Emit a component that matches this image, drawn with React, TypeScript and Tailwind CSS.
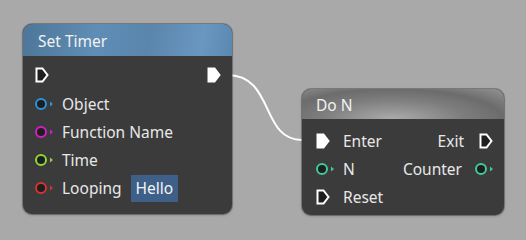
import React from "react";

type PinColor = string;

function ExecPin({ filled = false }: { filled?: boolean }) {
  return (
    <svg width="14" height="16" viewBox="0 0 14 16" className="shrink-0">
      <path
        d="M1.5 1.5 H7.5 L12.5 8 L7.5 14.5 H1.5 Z"
        fill={filled ? "#ffffff" : "#1e1e1e"}
        stroke="#ffffff"
        strokeWidth="2"
        strokeLinejoin="miter"
      />
    </svg>
  );
}

function DataPin({ color }: { color: PinColor }) {
  return (
    <svg width="19" height="12" viewBox="0 0 19 12" className="shrink-0">
      <circle cx="6" cy="6" r="5" fill="#1e1e1e" stroke={color} strokeWidth="2" />
      <path d="M15 3.5 L18 6 L15 8.5 Z" fill={color} />
    </svg>
  );
}

const label = "text-[15.5px] text-[#e8e8e8] leading-none pt-[2px]";

export default function App() {
  return (
    <div
      className="relative w-[526px] h-[240px] overflow-hidden bg-[#a9a9a9]"
      style={{ fontFamily: '"Noto Sans", "Open Sans", sans-serif' }}
    >
      {/* wire between the nodes */}
      <svg className="absolute left-0 top-0" width="526" height="240">
        <path d="M221 75 H227" stroke="#8a8a8a" strokeWidth="2" fill="none" />
        <path d="M227 75 C275 75, 260 140, 302 140" stroke="#ffffff" strokeWidth="2" fill="none" />
        <path d="M302 140 H314" stroke="#8a8a8a" strokeWidth="2" fill="none" />
      </svg>

      {/* Set Timer node */}
      <div className="absolute left-[23px] top-[24px] w-[209px] h-[190px] rounded-[9px] bg-[#3b3b3b] overflow-hidden shadow-[0_0_0_1px_rgba(70,70,70,0.45),0_1px_3px_rgba(0,0,0,0.25)]">
        <div className="h-[32px] flex items-center pl-[15px] pt-[4px] bg-[linear-gradient(100deg,#4d7698_0%,#5f8db5_35%,#5a86ad_60%,#6a97c0_85%,#5b88b0_100%)]">
          <span className="text-[15.5px] text-[#f2f2f2] leading-none">Set Timer</span>
        </div>
        <div className="pt-[5px]">
          <div className="h-[28px] flex items-center justify-between pl-[12px] pr-[11px]">
            <ExecPin />
            <ExecPin filled />
          </div>
          <div className="mt-[1px] flex flex-col">
            {[
              { name: "Object", color: "#2b92dc" },
              { name: "Function Name", color: "#d21fc4" },
              { name: "Time", color: "#8fd63a" },
            ].map((p) => (
              <div key={p.name} className="h-[28px] flex items-center pl-[12px] gap-[8px]">
                <DataPin color={p.color} />
                <span className={label}>{p.name}</span>
              </div>
            ))}
            <div className="h-[28px] flex items-center pl-[12px] gap-[8px]">
              <DataPin color="#d83232" />
              <span className={label}>Looping</span>
              <span className="ml-[1px] h-[27px] px-[5px] pt-[2px] flex items-center bg-[#3e5f88] text-[15.5px] text-[#f4f4f4] leading-none">
                Hello
              </span>
            </div>
          </div>
        </div>
      </div>

      {/* Do N node */}
      <div className="absolute left-[302px] top-[89px] w-[202px] h-[126px] rounded-[9px] bg-[#3b3b3b] overflow-hidden shadow-[0_0_0_1px_rgba(70,70,70,0.45),0_1px_3px_rgba(0,0,0,0.25)]">
        <div className="h-[30px] flex items-center pl-[14px] pt-[3px] bg-[radial-gradient(ellipse_at_45%_100%,#ababab_0%,#7e7e7e_45%,#6c6c6c_70%,#949494_100%)]">
          <span className="text-[15.5px] text-[#f2f2f2] leading-none">Do N</span>
        </div>
        <div className="pt-[8px] flex flex-col">
          <div className="h-[28px] flex items-center pl-[14px] pr-[11px]">
            <ExecPin filled />
            <span className={`${label} ml-[13px]`}>Enter</span>
            <span className={`${label} ml-auto mr-[15px]`}>Exit</span>
            <ExecPin />
          </div>
          <div className="h-[28px] flex items-center pl-[14px] pr-[10px]">
            <DataPin color="#3ccb9b" />
            <span className={`${label} ml-[8px]`}>N</span>
            <span className={`${label} ml-auto mr-[13px]`}>Counter</span>
            <DataPin color="#3ccb9b" />
          </div>
          <div className="h-[28px] flex items-center pl-[14px]">
            <ExecPin />
            <span className={`${label} ml-[13px]`}>Reset</span>
          </div>
        </div>
      </div>
    </div>
  );
}
